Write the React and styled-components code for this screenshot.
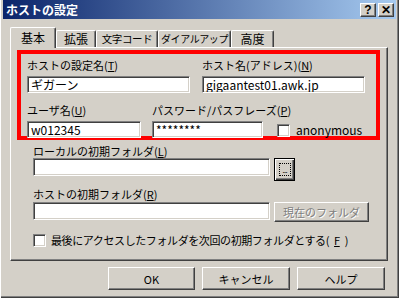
import React from 'react'
import styled, { createGlobalStyle } from 'styled-components'

const Global = createGlobalStyle`
  html, body { margin: 0; padding: 0; background: #d4d0c8; }
  * { box-sizing: border-box; }
`;

const font = `"Noto Sans CJK JP", "Noto Sans", sans-serif`;

const Window = styled.div`
  width: 399px;
  height: 298px;
  background: #d4d0c8;
  padding: 0 3px 3px 3px;
  box-shadow: inset 1px 0 #ffffff, inset -1px -1px #404040, inset -2px -2px #808080;
  font-family: ${font};
  font-size: 11px;
  color: #000;
  display: flex;
  flex-direction: column;
`;

const TitleBar = styled.div`
  height: 19px;
  background: linear-gradient(to right, #0a246a, #a6caf0);
  display: flex;
  align-items: center;
  padding: 0 2px 0 3px;
`;

const TitleText = styled.div`
  flex: 1;
  color: #fff;
  font-weight: bold;
  font-size: 12px;
  line-height: 19px;
`;

const TitleButton = styled.div`
  width: 16px;
  height: 14px;
  margin-left: 2px;
  background: #d4d0c8;
  border-top: 1px solid #fff;
  border-left: 1px solid #fff;
  border-right: 1px solid #404040;
  border-bottom: 1px solid #404040;
  box-shadow: inset -1px -1px #808080;
  display: flex;
  align-items: center;
  justify-content: center;
  font-family: "Liberation Sans", sans-serif;
  font-weight: bold;
  font-size: 12px;
  line-height: 12px;
`;

const Body = styled.div`
  padding: 8px 5px 0 7px;
`;

const TabStrip = styled.div`
  display: flex;
  align-items: flex-end;
  height: 20px;
  position: relative;
  z-index: 1;
`;

const Tab = styled.div`
  width: ${p => p.$w}px;
  flex-shrink: 0;
  height: ${p => (p.$active ? 21 : 17)}px;
  margin-bottom: ${p => (p.$active ? -1 : 0)}px;
  background: #d4d0c8;
  border-top: 1px solid #fff;
  border-left: 1px solid #fff;
  border-right: 1px solid #404040;
  border-radius: 2px 2px 0 0;
  box-shadow: inset -1px 0 #808080;
  display: flex;
  align-items: flex-start;
  justify-content: center;
  padding-top: ${p => (p.$active ? 3 : 1)}px;
  font-size: ${p => p.$size || 12}px;
  letter-spacing: ${p => (p.$size ? -0.4 : 0)}px;
  line-height: 14px;
  white-space: nowrap;
`;

const Panel = styled.div`
  width: 378px;
  height: 214px;
  border-top: 1px solid #fff;
  border-left: 1px solid #fff;
  border-right: 1px solid #404040;
  border-bottom: 1px solid #404040;
  box-shadow: inset -1px -1px #808080;
  padding: 2px 0 0 6px;
`;

const Highlight = styled.div`
  width: 363px;
  height: 90px;
  border: 4px solid #ff0000;
  padding: 4px 0 0 6px;
`;

const Row = styled.div`
  display: flex;
  align-items: ${p => p.$align || 'flex-start'};
  gap: ${p => p.$gap || 0}px;
  margin-top: ${p => p.$top || 0}px;
`;

const Field = styled.div`
  width: ${p => p.$w}px;
  display: flex;
  flex-direction: column;
`;

const Label = styled.div`
  height: 14px;
  line-height: 14px;
  margin-bottom: ${p => p.$mb ?? 4}px;
  white-space: nowrap;
`;

const Input = styled.div`
  width: ${p => (p.$w ? `${p.$w}px` : '100%')};
  height: ${p => p.$h || 17}px;
  background: #fff;
  border-top: 1px solid #808080;
  border-left: 1px solid #808080;
  border-right: 1px solid #fff;
  border-bottom: 1px solid #fff;
  box-shadow: inset 1px 1px #404040, inset -1px -1px #d4d0c8;
  padding: 0 3px;
  font-size: 12px;
  line-height: 15px;
  white-space: nowrap;
  overflow: hidden;
`;

const CheckBox = styled.div`
  width: 13px;
  height: 13px;
  background: #fff;
  border-top: 1px solid #808080;
  border-left: 1px solid #808080;
  border-right: 1px solid #fff;
  border-bottom: 1px solid #fff;
  box-shadow: inset 1px 1px #404040, inset -1px -1px #d4d0c8;
  flex-shrink: 0;
`;

const CheckLabel = styled.label`
  display: flex;
  align-items: center;
  gap: ${p => p.$gap || 5}px;
  white-space: nowrap;
  line-height: 14px;
  font-size: ${p => p.$size || 11}px;
  letter-spacing: ${p => p.$spacing || 0}px;
`;

const Lower = styled.div`
  padding-left: 16px;
`;

const Button = styled.div`
  width: ${p => p.$w}px;
  height: ${p => p.$h}px;
  background: #d4d0c8;
  border-top: 1px solid #fff;
  border-left: 1px solid #fff;
  border-right: 1px solid #404040;
  border-bottom: 1px solid #404040;
  box-shadow: inset -1px -1px #808080;
  display: flex;
  align-items: center;
  justify-content: center;
  white-space: nowrap;
  color: ${p => (p.$disabled ? '#808080' : '#000')};
  text-shadow: ${p => (p.$disabled ? '1px 1px #ffffff' : 'none')};
  flex-shrink: 0;
`;

const DefaultButton = styled(Button)`
  border: 1px solid #000;
  box-shadow: inset 1px 1px #fff, inset -1px -1px #404040, inset -2px -2px #808080;
`;

const FocusRect = styled.div`
  width: 12px;
  height: 13px;
  border: 1px dotted #000;
  display: flex;
  align-items: flex-end;
  justify-content: center;
  font-family: "Liberation Sans", sans-serif;
  font-size: 9px;
  line-height: 9px;
  letter-spacing: -1px;
`;

const Footer = styled.div`
  display: flex;
  justify-content: flex-end;
  gap: 7px;
  padding: 6px 6px 0 0;
`;

export default function App() {
  return (
    <>
      <Global />
      <Window>
        <TitleBar>
          <TitleText>ホストの設定</TitleText>
          <TitleButton>?</TitleButton>
          <TitleButton>✕</TitleButton>
        </TitleBar>
        <Body>
          <TabStrip>
            <Tab $w={46} $active>基本</Tab>
            <Tab $w={40}>拡張</Tab>
            <Tab $w={62} $size={10.5}>文字コード</Tab>
            <Tab $w={73} $size={10}>ダイアルアップ</Tab>
            <Tab $w={43}>高度</Tab>
          </TabStrip>
          <Panel>
            <Highlight>
              <Row $gap={12}>
                <Field $w={163}>
                  <Label>ホストの設定名(<u>T</u>)</Label>
                  <Input>ギガーン</Input>
                </Field>
                <Field $w={163}>
                  <Label>ホスト名(アドレス)(<u>N</u>)</Label>
                  <Input>gigaantest01.awk.jp</Input>
                </Field>
              </Row>
              <Row $gap={11} $top={10} $align="flex-end">
                <Field $w={114}>
                  <Label>ユーザ名(<u>U</u>)</Label>
                  <Input>w012345</Input>
                </Field>
                <Field $w={111}>
                  <Label>パスワード/パスフレーズ(<u>P</u>)</Label>
                  <Input>********</Input>
                </Field>
                <CheckLabel $gap={6} $size={12} style={{ marginLeft: 3, marginBottom: 1 }}>
                  <CheckBox />
                  anonymous
                </CheckLabel>
              </Row>
            </Highlight>
            <Lower>
              <Row $top={4}>
                <Label $mb={0}>ローカルの初期フォルダ(<u>L</u>)</Label>
              </Row>
              <Row $gap={4}>
                <Input $w={237} $h={18} />
                <DefaultButton $w={21} $h={23}>
                  <FocusRect>...</FocusRect>
                </DefaultButton>
              </Row>
              <Row $top={6}>
                <Label $mb={1}>ホストの初期フォルダ(<u>R</u>)</Label>
              </Row>
              <Row $gap={4}>
                <Input $w={237} $h={18} />
                <Button $w={95} $h={20} $disabled>現在のフォルダ</Button>
              </Row>
              <Row $top={11}>
                <CheckLabel $gap={5} $spacing={-0.4}>
                  <CheckBox />
                  最後にアクセスしたフォルダを次回の初期フォルダとする(<u>F</u>)
                </CheckLabel>
              </Row>
            </Lower>
          </Panel>
          <Footer>
            <Button $w={87} $h={23}>OK</Button>
            <Button $w={88} $h={23}>キャンセル</Button>
            <Button $w={88} $h={23}>ヘルプ</Button>
          </Footer>
        </Body>
      </Window>
    </>
  )
}
